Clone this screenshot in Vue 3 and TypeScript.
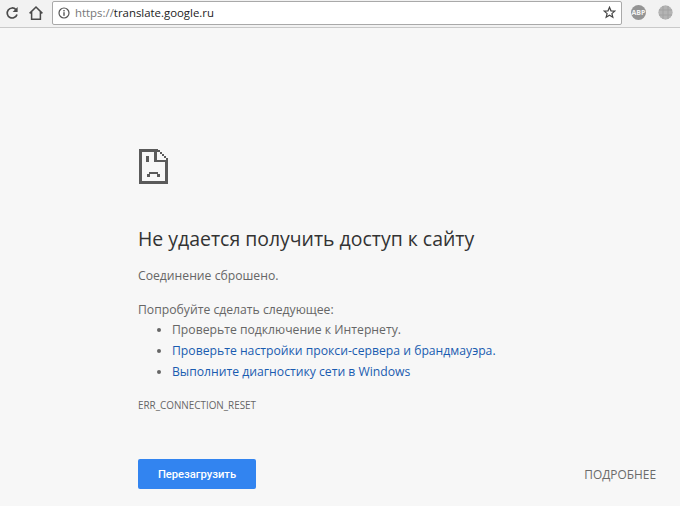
<script setup lang="ts">
const tips: { text: string; link: boolean }[] = [
  { text: 'Проверьте подключение к Интернету.', link: false },
  { text: 'Проверьте настройки прокси-сервера и брандмауэра.', link: true },
  { text: 'Выполните диагностику сети в Windows', link: true },
]
</script>

<template>
  <div class="page">
    <header class="toolbar">
      <svg class="nav reload" width="14" height="14" viewBox="0 0 14 14">
        <path d="M10.9 3.6A5 5 0 1 0 12 8.4" fill="none" stroke="#4a4a4a" stroke-width="1.7" />
        <path d="M12.6 1V6H7.6Z" fill="#4a4a4a" />
      </svg>
      <svg class="nav home" width="16" height="16" viewBox="0 0 16 16">
        <path d="M1.6 8.4 8 2l6.4 6.4M3.6 7v7.2h8.8V7" fill="none" stroke="#4a4a4a" stroke-width="1.5" />
      </svg>
      <div class="omnibox">
        <svg width="12" height="12" viewBox="0 0 12 12">
          <circle cx="6" cy="6" r="5" fill="none" stroke="#555" stroke-width="1.2" />
          <rect x="5.3" y="5.2" width="1.4" height="3.6" fill="#555" />
          <rect x="5.3" y="3" width="1.4" height="1.4" fill="#555" />
        </svg>
        <span class="url"><span class="scheme">https://</span>translate.google.ru</span>
        <svg class="star" width="13" height="13" viewBox="0 0 14 14">
          <path d="M7 1.4 8.6 5.2l4.1.3-3.1 2.7 1 4L7 10l-3.6 2.2 1-4-3.1-2.7 4.1-.3Z" fill="none" stroke="#444" stroke-width="1.3" />
        </svg>
      </div>
      <div class="ext abp"><span>ABP</span></div>
      <svg class="ext globe" width="15" height="15" viewBox="0 0 15 15">
        <circle cx="7.5" cy="7.5" r="7.2" fill="#b4b4b4" />
        <path d="M1 5h13M1 10h13M5 1v13M10 1v13" stroke="#a2a2a2" stroke-width="1" fill="none" />
      </svg>
    </header>

    <main class="content">
      <svg class="sad" width="29" height="35" viewBox="0 0 29 35" shape-rendering="crispEdges">
        <path d="M0 0h19v3H3v29h23V11h3v24H0Z" fill="#5a5a5a" />
        <path d="M15 0h3v11h11v2H15ZM19 1h2v2h-2ZM21 3h2v2h-2ZM23 5h2v2h-2ZM25 7h2v2h-2ZM27 9h2v2h-2Z" fill="#5a5a5a" />
        <path d="M7 7h3v6H7ZM8 28v-3h2v-2h9v2h2v3h-3v-3H11v3Z" fill="#5a5a5a" />
      </svg>

      <h1 class="title">Не удается получить доступ к сайту</h1>
      <p class="reason">Соединение сброшено.</p>
      <p class="try">Попробуйте сделать следующее:</p>
      <ul class="tips">
        <li v-for="tip in tips" :key="tip.text">
          <span :class="{ link: tip.link }">{{ tip.text }}</span>
        </li>
      </ul>
      <div class="code">ERR_CONNECTION_RESET</div>

      <div class="actions">
        <button class="reload-btn" type="button">Перезагрузить</button>
        <span class="details">ПОДРОБНЕЕ</span>
      </div>
    </main>
  </div>
</template>

<style>
html, body { margin: 0; background: #f7f7f7; }
</style>

<style scoped>
.page {
  width: 680px;
  height: 506px;
  overflow: hidden;
  background: #f7f7f7;
  font-family: "Open Sans", "Noto Sans", sans-serif;
}
.toolbar {
  box-sizing: border-box;
  height: 28px;
  display: flex;
  align-items: center;
  padding: 0 0 2px 5px;
  background: #f2f2f2;
  border-bottom: 1px solid #c9c9c9;
}
.nav { flex: none; }
.home { margin-left: 9px; }
.omnibox {
  box-sizing: border-box;
  flex: none;
  width: 570px;
  height: 24px;
  margin-left: 8px;
  padding: 0 5px;
  display: flex;
  align-items: center;
  background: #fff;
  border: 1px solid #a9a9a9;
  border-radius: 2px;
}
.url {
  margin-left: 5px;
  font-size: 11.4px;
  color: #222;
  flex: 1;
}
.scheme { color: #777; }
.ext {
  flex: none;
  width: 15px;
  height: 15px;
  border-radius: 50%;
  display: flex;
  align-items: center;
  justify-content: center;
}
.abp {
  margin-left: 9px;
  background: #949494;
}
.abp span {
  font-size: 7px;
  font-weight: 700;
  color: #f2f2f2;
}
.globe {
  margin-left: 12px;
}
.content {
  box-sizing: border-box;
  height: 478px;
  padding: 121px 24px 0 138px;
  color: #666;
  font-size: 12.2px;
}
.sad {
  display: block;
  margin-left: 1px;
}
.title {
  margin: 42px 0 0;
  font-size: 19.45px;
  line-height: 26px;
  font-weight: 400;
  color: #333;
}
.reason { margin: 14px 0 0; line-height: 20px; }
.try { margin: 14px 0 0; line-height: 20px; }
.tips {
  margin: -1px 0 0;
  padding: 0 0 0 34px;
  line-height: 21px;
}
.link { color: #1a5cb0; }
.code {
  margin-top: 16px;
  font-size: 9.9px;
  line-height: 14px;
}
.actions {
  margin-top: 47px;
  display: flex;
  align-items: center;
  justify-content: space-between;
}
.reload-btn {
  width: 118px;
  height: 30px;
  border: 0;
  border-radius: 2px;
  background: #3284f0;
  color: #fff;
  font-family: Roboto, sans-serif;
  font-size: 11.2px;
  font-weight: 500;
}
.details {
  font-size: 11.9px;
  color: #6a6a6a;
}
</style>
